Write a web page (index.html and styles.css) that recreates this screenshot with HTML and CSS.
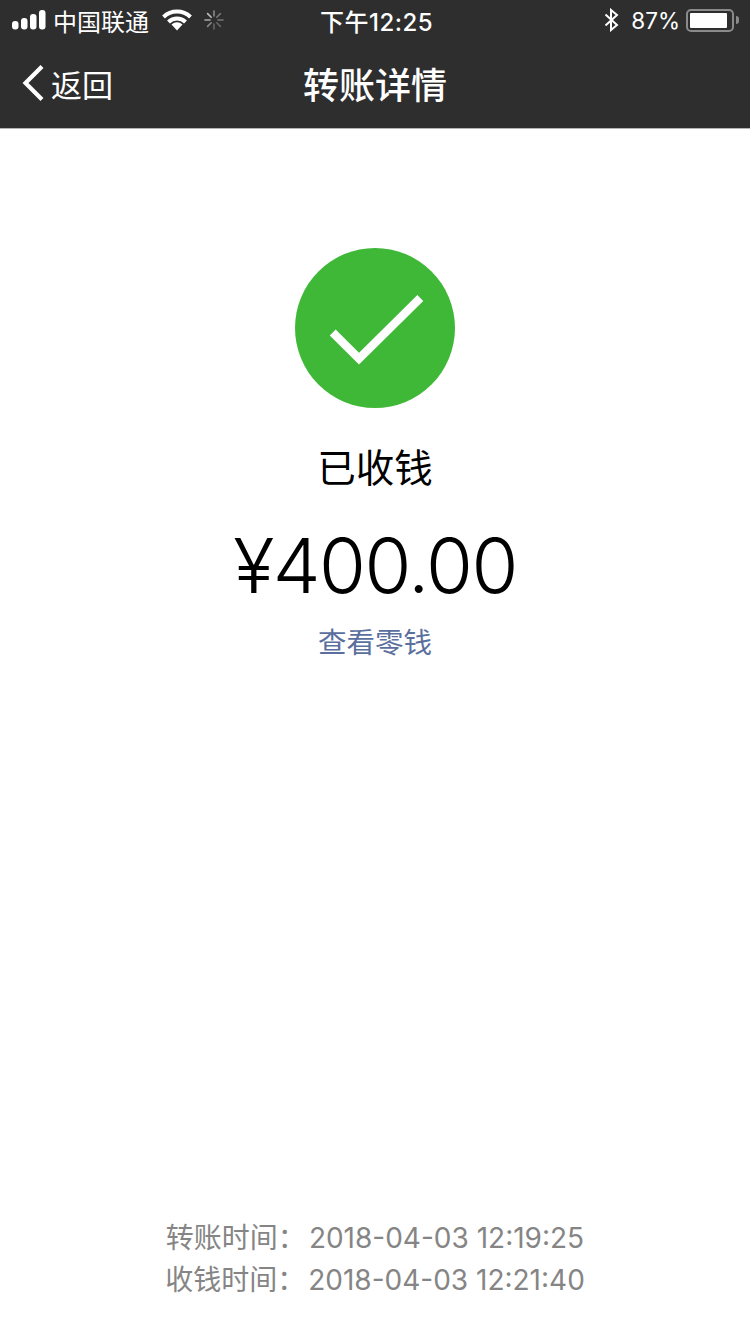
FILE: index.html
```html
<!DOCTYPE html>
<html lang="zh-CN">
	<head>
		<meta charset="utf-8" />
		<title>转账详情</title>
		<link rel="stylesheet" href="styles.css">
	</head>
	<body>
		<div id="page">
			<div class="header">
				<div class="status-bar">
					<div class="status-left">
						<svg class="signal" width="34" height="20" viewBox="0 0 34 20">
							<rect x="0" y="11" width="6.5" height="8.5" rx="3" fill="#fff"/>
							<rect x="9" y="8" width="6.5" height="11.5" rx="3" fill="#fff"/>
							<rect x="18" y="4" width="6.5" height="15.5" rx="3" fill="#fff"/>
							<rect x="27" y="0" width="6.5" height="19.5" rx="3" fill="#fff"/>
						</svg>
						<span class="carrier">中国联通</span>
						<svg class="wifi" width="30" height="22" viewBox="0 0 30 22">
							<path d="M1.5 8 A19.5 19.5 0 0 1 28.5 8" fill="none" stroke="#fff" stroke-width="4"/>
							<path d="M6.5 13 A12 12 0 0 1 23.5 13" fill="none" stroke="#fff" stroke-width="4"/>
							<path d="M9.5 15.5 A8 8 0 0 1 20.5 15.5 L15 21.5 Z" fill="#fff"/>
						</svg>
						<svg class="spinner" width="20" height="20" viewBox="0 0 20 20" stroke-width="1.6" stroke-linecap="round">
							<path d="M10 1 V6" stroke="#8a8a8a"/>
							<path d="M16.4 3.6 L12.8 7.2" stroke="#777"/>
							<path d="M19 10 H14" stroke="#777"/>
							<path d="M16.4 16.4 L12.8 12.8" stroke="#666"/>
							<path d="M10 19 V14" stroke="#666"/>
							<path d="M3.6 16.4 L7.2 12.8" stroke="#888"/>
							<path d="M1 10 H6" stroke="#aaa"/>
							<path d="M3.6 3.6 L7.2 7.2" stroke="#bbb"/>
						</svg>
					</div>
					<div class="status-time">下午12:25</div>
					<div class="status-right">
						<svg class="bluetooth" width="16" height="24" viewBox="0 0 16 24">
							<path d="M2.5 6.5 L14 17 L8 22 V2 L14 7 L2.5 17.5" fill="none" stroke="#fff" stroke-width="2"/>
						</svg>
						<span class="battery-text">87%</span>
						<div class="battery">
							<div class="battery-body"><div class="battery-level"></div></div>
							<div class="battery-tip"></div>
						</div>
					</div>
				</div>
				<div class="nav-bar">
					<div class="nav-back">
						<svg width="22" height="36" viewBox="0 0 22 36">
							<path d="M20 1.5 L3.5 18 L20 34.5" fill="none" stroke="#fff" stroke-width="4.2"/>
						</svg>
						<span>返回</span>
					</div>
					<div class="nav-title">转账详情</div>
				</div>
			</div>

			<div class="main">
				<svg class="check-icon" width="160" height="160" viewBox="0 0 160 160">
					<circle cx="80" cy="80" r="80" fill="#3fb838"/>
					<path d="M37.7 84.5 L64 110.7 L125.3 50" fill="none" stroke="#fff" stroke-width="8.4"/>
				</svg>
				<div class="state">已收钱</div>
				<div class="amount">¥400.00</div>
				<div class="link">查看零钱</div>
			</div>

			<div class="times">
				<div class="time-row"><span class="time-label">转账时间：</span><span>2018-04-03 12:19:25</span></div>
				<div class="time-row"><span class="time-label">收钱时间：</span><span>2018-04-03 12:21:40</span></div>
			</div>
		</div>
	</body>
</html>
```

FILE: styles.css
```css
html,
body
{
	margin: 0;
	padding: 0;
	background: #ffffff;
}

#page
{
	display: flex;
	flex-direction: column;
	width: 750px;
	height: 1334px;
	overflow: hidden;
	font-family: Inter, "Noto Sans CJK SC", sans-serif;
}

.header
{
	background: #2e2e2e;
	border-bottom: 1px solid #b4b4b4;
	color: #ffffff;
}

.status-bar
{
	display: grid;
	grid-template-columns: 1fr auto 1fr;
	align-items: center;
	height: 40px;
	padding: 0 11px 0 12px;
	font-size: 24px;
}

.status-left,
.status-right
{
	display: flex;
	align-items: center;
}

.status-right
{
	justify-content: flex-end;
}

.status-time
{
	padding-left: 2px;
	font-weight: 500;
	letter-spacing: 0.5px;
}

.carrier
{
	margin-left: 7px;
	font-size: 24px;
}

.wifi
{
	margin-left: 13px;
}

.spinner
{
	margin-left: 12px;
}

.bluetooth
{
	margin-right: 12px;
}

.battery-text
{
	font-size: 22.5px;
}

.battery
{
	display: flex;
	align-items: center;
	margin-left: 6px;
}

.battery-body
{
	box-sizing: border-box;
	width: 48px;
	height: 23px;
	padding: 2px;
	border: 2px solid #8a8a8a;
	border-radius: 5px;
}

.battery-level
{
	width: 37px;
	height: 100%;
	background: #ffffff;
	border-radius: 1px;
}

.battery-tip
{
	width: 3px;
	height: 8px;
	margin-left: 2px;
	background: #8a8a8a;
	border-radius: 0 3px 3px 0;
}

.nav-bar
{
	display: grid;
	grid-template-columns: 1fr auto 1fr;
	align-items: center;
	box-sizing: border-box;
	height: 88px;
	padding: 0 22px 2px;
}

.nav-back
{
	display: flex;
	align-items: center;
	gap: 7px;
	font-size: 31px;
}

.nav-title
{
	font-size: 36px;
	font-weight: 500;
}

.main
{
	display: flex;
	flex: 1;
	flex-direction: column;
	align-items: center;
	padding-top: 119px;
}

.state
{
	margin-top: 36px;
	font-size: 38.5px;
	line-height: 48px;
	color: #000000;
}

.amount
{
	margin-top: 25px;
	font-size: 76px;
	font-weight: 300;
	letter-spacing: -1.5px;
	line-height: 96px;
	color: #000000;
}

.link
{
	margin-top: 10px;
	font-size: 28.5px;
	line-height: 40px;
	color: #5b6f9e;
}

.times
{
	padding-bottom: 33px;
	font-size: 28px;
	line-height: 42px;
	color: #858585;
	text-align: center;
}

.time-row
{
	display: flex;
	justify-content: center;
}

.time-label
{
	margin-right: 3px;
}
```
